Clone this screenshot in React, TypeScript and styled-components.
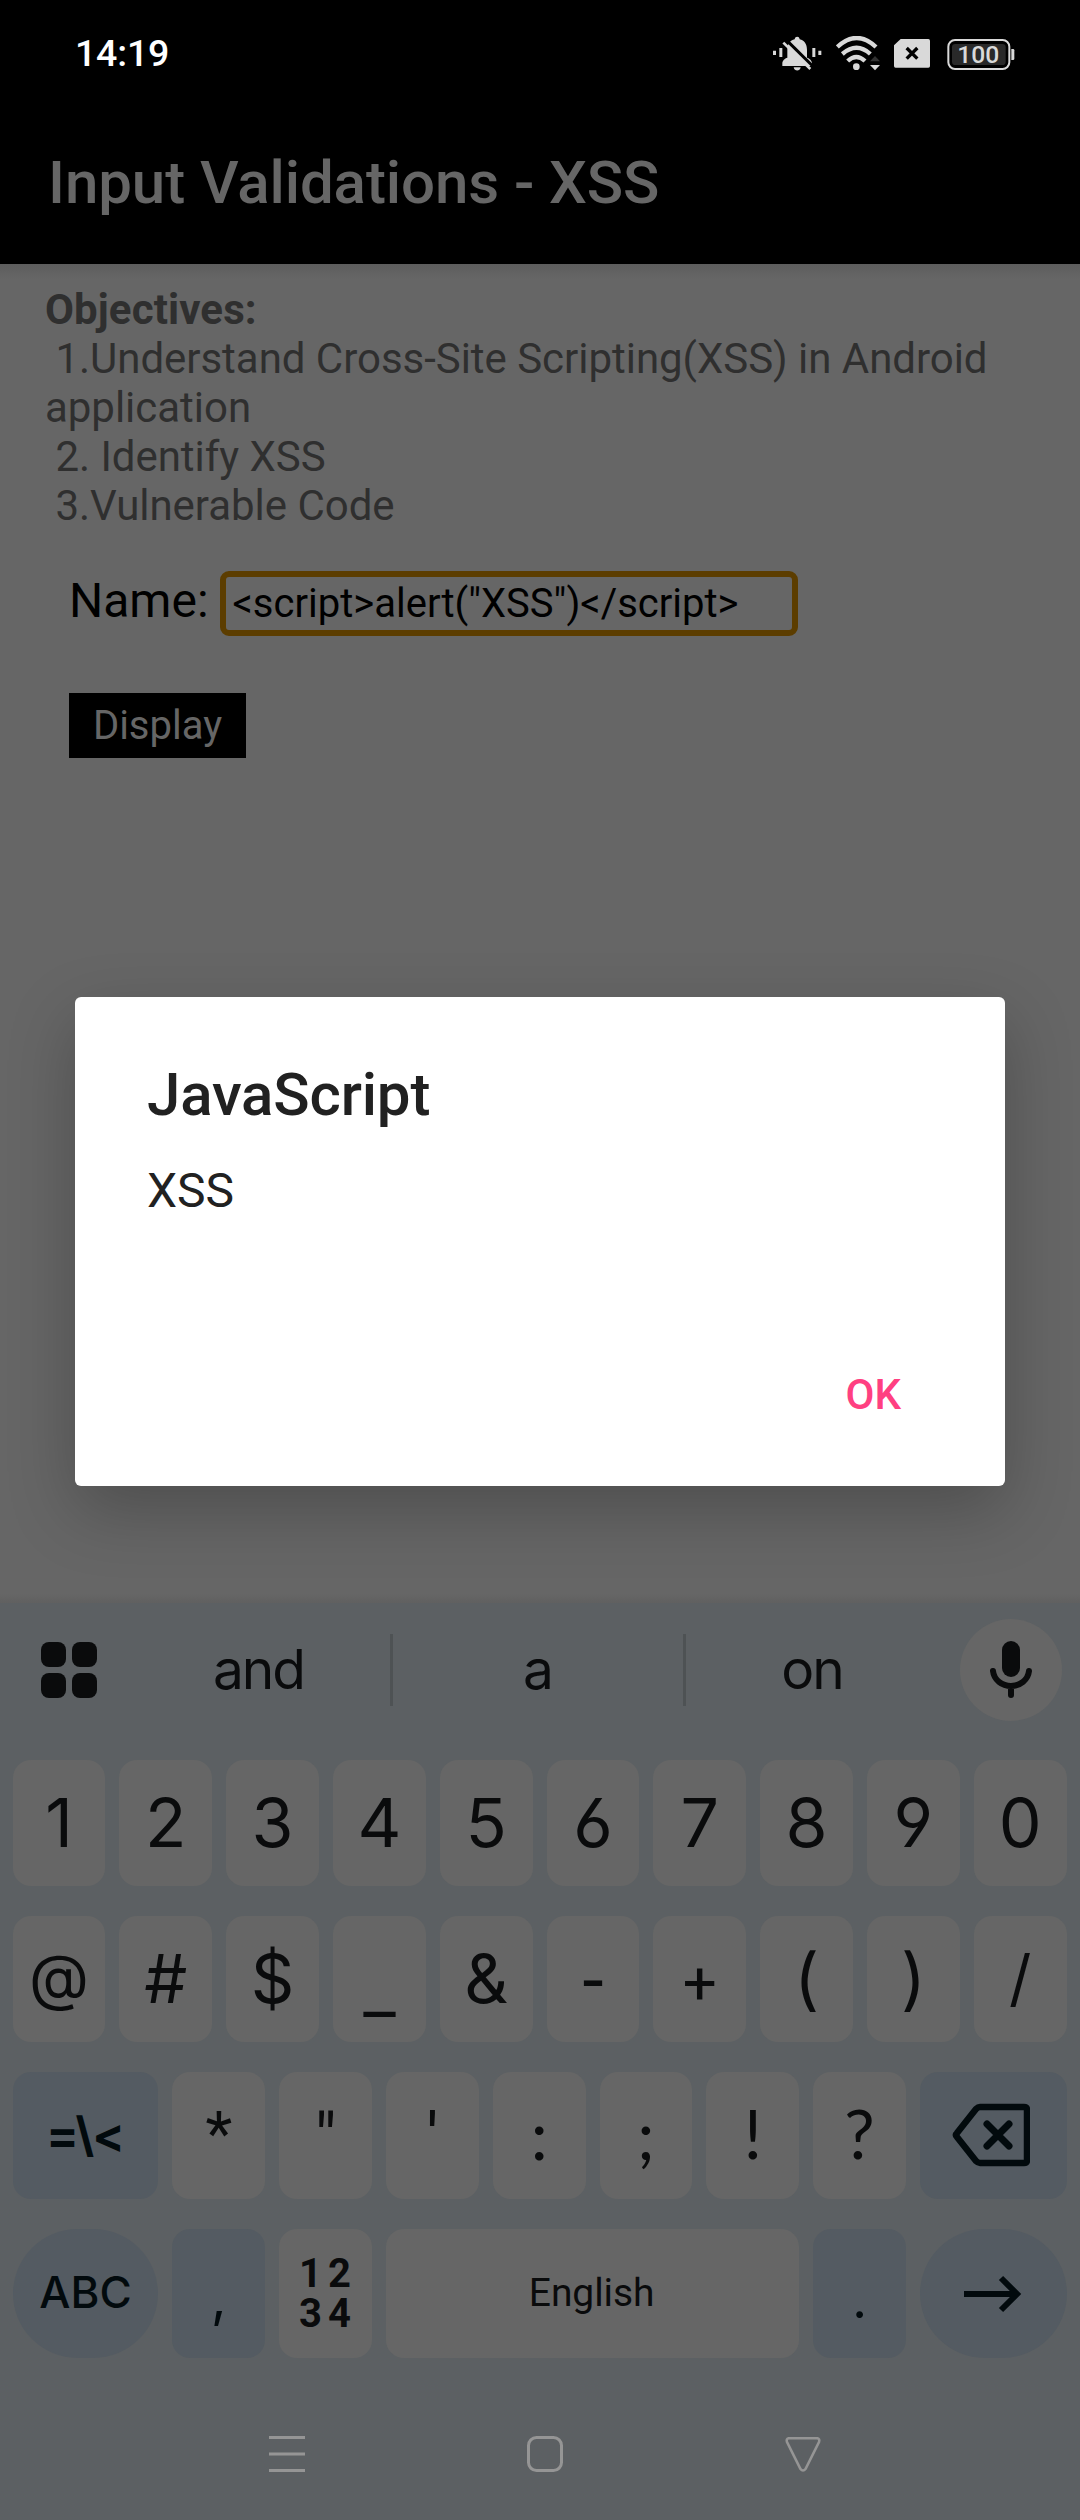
import React from 'react';
import styled, { createGlobalStyle, css } from 'styled-components';

const Global = createGlobalStyle`
  * { box-sizing: border-box; }
  body { margin: 0; background: #666; }
`;

const Screen = styled.div`
  position: relative;
  display: flex;
  flex-direction: column;
  width: 1080px;
  height: 2520px;
  overflow: hidden;
  background: #666666;
  font-family: Roboto, 'Liberation Sans', sans-serif;
`;

const StatusBar = styled.header`
  display: flex;
  align-items: center;
  justify-content: space-between;
  height: 101px;
  padding: 5px 64px 0 75px;
  background: #000;
`;

const Clock = styled.span`
  color: #fff;
  font-size: 37.5px;
  font-weight: 500;
  line-height: 44px;
  letter-spacing: -0.2px;
`;

const StatusIcons = styled.div`
  display: flex;
  align-items: center;
  gap: 14px;
  height: 35px;
  svg { display: block; }
  svg:last-child { margin-left: 3px; }
`;

const Toolbar = styled.div`
  display: flex;
  align-items: center;
  height: 163px;
  padding-left: 48px;
  background: #000;
`;

const ToolbarTitle = styled.h1`
  margin: 0;
  color: #666666;
  font-size: 60px;
  font-weight: 500;
  line-height: 70px;
  letter-spacing: -0.08px;
  white-space: nowrap;
`;

const Page = styled.main`
  height: 1339px;
  padding: 21px 45px 0;
  background:
    linear-gradient(#5d5d5d, #666666) 0 0 / 100% 15px no-repeat,
    linear-gradient(#666666, #606060) 0 100% / 100% 9px no-repeat,
    #666666;
`;

const Objectives = styled.div`
  height: 286px;
  color: #2f2f2f;
  font-size: 42px;
  line-height: 49px;
  letter-spacing: -0.03px;
  white-space: pre;
  b { letter-spacing: 0.12px; }
`;

const Form = styled.form`
  display: flex;
  flex-direction: column;
  align-items: flex-start;
  gap: 57px;
  padding-left: 24px;
  color: #000;
`;

const Field = styled.label`
  display: flex;
  align-items: baseline;
  gap: 11px;
  height: 65px;
  font-size: 48px;
  line-height: 56px;
`;

const Input = styled.span`
  width: 578px;
  height: 65px;
  padding: 0 7px;
  border: 6px solid #5c3d00;
  border-radius: 9px;
  font-size: 40px;
  line-height: 53px;
  white-space: nowrap;
`;

const SubmitButton = styled.button`
  width: 177px;
  height: 65px;
  padding: 0;
  border: 0;
  background: #000;
  color: #666666;
  font-family: inherit;
  font-size: 40px;
  line-height: 65px;
`;

const Dialog = styled.section`
  position: absolute;
  top: 997px;
  left: 75px;
  display: flex;
  flex-direction: column;
  width: 930px;
  height: 489px;
  padding: 63px 72px 66px;
  border-radius: 6px;
  background: #fff;
  color: #212121;
  box-shadow: 0 24px 68px rgba(0, 0, 0, 0.24);
`;

const DialogTitle = styled.h2`
  margin: 0 0 33px;
  font-size: 60px;
  font-weight: 500;
  line-height: 70px;
  letter-spacing: -0.15px;
`;

const DialogMessage = styled.p`
  flex: 1;
  margin: 0;
  font-size: 48px;
  line-height: 56px;
`;

const DialogButton = styled.button`
  align-self: flex-end;
  margin-right: 32px;
  padding: 0;
  border: 0;
  background: none;
  color: #ff4081;
  font-family: inherit;
  font-size: 42px;
  font-weight: 500;
  line-height: 50px;
`;

const Keyboard = styled.section`
  display: flex;
  flex-direction: column;
  height: 917px;
  background: #5c6063;
  color: #0a0b0c;
  font-family: Inter, Roboto, sans-serif;
`;

const Suggestions = styled.div`
  display: flex;
  align-items: center;
  height: 134px;
  margin-bottom: 23px;
`;

const GridButton = styled.div`
  display: grid;
  grid-template-columns: 25px 25px;
  gap: 6px;
  width: 128px;
  padding-left: 41px;
  span {
    height: 25px;
    border-radius: 8px;
    background: #0a0b0c;
  }
`;

const Suggestion = styled.span<{ $w: number }>`
  width: ${(p) => p.$w}px;
  padding: 0 1px 2px 0;
  text-align: center;
  font-size: 55px;
  font-weight: 400;
  line-height: 66px;
  letter-spacing: -2px;
`;

const Divider = styled.span`
  width: 3px;
  height: 72px;
  background: #4e5254;
`;

const MicButton = styled.div`
  display: flex;
  align-items: center;
  justify-content: center;
  width: 102px;
  height: 102px;
  margin-left: 21px;
  border-radius: 50%;
  background: #666666;
`;

const Rows = styled.div`
  display: flex;
  flex-direction: column;
  gap: 30px;
  padding: 0 13px 0 12.6px;
`;

const Row = styled.div<{ $h?: number }>`
  display: flex;
  gap: 14px;
  height: ${(p) => p.$h ?? 126}px;
`;

type Face = 'inter' | 'lato' | 'roboto';
const faces: Record<Face, string> = {
  inter: "Inter, sans-serif",
  lato: "Lato, sans-serif",
  roboto: "Roboto, sans-serif",
};

const Key = styled.div<{
  $tone?: 'light' | 'blue';
  $shape?: 'wide' | 'space';
  $pill?: boolean;
  $face?: Face;
  $size?: number;
  $weight?: number;
  $drop?: number;
}>`
  display: flex;
  align-items: center;
  justify-content: center;
  flex: 0 0 92.8px;
  padding-top: ${(p) => Math.max(0, p.$drop ?? 0)}px;
  padding-bottom: ${(p) => Math.max(0, -(p.$drop ?? 0))}px;
  border-radius: ${(p) => (p.$pill ? 65 : 18)}px;
  background: ${(p) => (p.$tone === 'blue' ? '#545b62' : '#666666')};
  color: ${(p) => (p.$tone === 'blue' ? '#020a0d' : '#0a0b0c')};
  font-family: ${(p) => faces[p.$face ?? 'inter']};
  font-size: ${(p) => p.$size ?? 68}px;
  font-weight: ${(p) => p.$weight ?? 400};
  font-feature-settings: 'cv03', 'cv04';
  line-height: 1;
  white-space: nowrap;
  ${(p) => p.$shape === 'wide' && css`
    flex: 0 0 145.8px;
    &:last-child { flex-basis: 147px; }
  `}
  ${(p) => p.$shape === 'space' && css`flex: 1;`}
`;

const NumberPad = styled.div`
  display: grid;
  grid-template-columns: 29px 22px;
  margin-right: 2px;
  font-family: Roboto, sans-serif;
  font-size: 40px;
  font-weight: 700;
  line-height: 40px;
`;

const SpaceLabel = styled.span`
  margin-right: 2px;
  letter-spacing: -0.1px;
`;

const NavBar = styled.nav`
  display: flex;
  align-items: center;
  gap: 222px;
  flex: 1;
  padding: 30px 0 0 269px;
  svg { display: block; }
`;

const ink = '#d9d9d9';

const MutedBell = () => (
  <svg width="49" height="35" viewBox="101 45 147 105" fill={ink}>
    <path d="M101 89h9v13h-9zM120 81h9v27h-9zM219 81h9v27h-9zM237 89h9v13h-9z" />
    <path d="M166 55c1-10 14-10 15 0 14 3 22 15 22 31v24c8 2 15 9 15 17v8h-89v-8c0-8 7-15 15-17V86c0-16 8-28 22-31z" />
    <path d="M163 139h21c-2 13-19 13-21 0z" />
    <path d="M140 56L226 141" stroke="#000" strokeWidth="9" />
    <path d="M120 60L134 57 143 66 136 80z" fill="#000" />
    <path d="M132 65L213 144" stroke={ink} strokeWidth="8" />
  </svg>
);

const Wifi = () => (
  <svg width="44" height="35" viewBox="288 45 132 105" fill="none" stroke={ink}>
    <path d="M292 78Q350 24 408 78" strokeWidth="13" />
    <path d="M307 99Q350 62 391 99" strokeWidth="13" />
    <path d="M323 120Q349 96 375 120" strokeWidth="13" />
    <circle cx="349" cy="137" r="10" fill={ink} stroke="none" />
    <path d="M378 123L405 93 430 123z" fill="#000" stroke="none" />
    <path d="M390 121L405 105 420 121z" fill="#303030" stroke="none" />
    <path d="M390 132H420L405 148z" fill={ink} stroke="none" />
  </svg>
);

const SimOff = () => (
  <svg width="36" height="35" viewBox="462 45 108 105">
    <path d="M482 54h83q5 0 5 5v76q0 5-5 5h-98q-5 0-5-5V73z" fill={ink} />
    <path d="M500 81l32 32M532 81l-32 32" stroke="#000" strokeWidth="10" />
  </svg>
);

const Battery = () => (
  <svg width="69" height="35" viewBox="620 45 207 105">
    <rect x="624" y="57" width="183" height="87" rx="20" fill="none" stroke={ink} strokeWidth="6" />
    <rect x="635" y="69" width="161" height="63" rx="10" fill="#292929" />
    <path d="M813 84h5q4 0 4 4v25q0 4-4 4h-5z" fill={ink} />
    <text x="714" y="125" fill={ink} fontFamily="Roboto, sans-serif" fontSize="74" fontWeight="500" textAnchor="middle">100</text>
  </svg>
);

const Mic = () => (
  <svg width="44" height="60" viewBox="989 1639 44 60">
    <rect x="1002" y="1640" width="18" height="36" rx="9" fill="#0a0b0c" />
    <path d="M993 1670c1 9 9 15 18 15s17-6 18-15M1011 1685v9" fill="none" stroke="#0a0b0c" strokeWidth="6" strokeLinecap="round" />
  </svg>
);

const KeyIcon = styled.svg<{ $nudge: number }>`
  display: block;
  margin-right: ${(p) => p.$nudge}px;
`;

const Backspace = () => (
  <KeyIcon $nudge={4} width="78" height="64" viewBox="952 2103 78 64" fill="none" stroke="#020a0d" strokeWidth="6.5" strokeLinecap="round" strokeLinejoin="round">
    <path d="M980 2107h44q3 0 3 3v50q0 3-3 3h-44q-2 0-4-2l-19-24q-2-2 0-4l19-24q2-2 4-2z" />
    <path d="M987 2124l22 22M1009 2124l-22 22" strokeWidth="7" />
  </KeyIcon>
);

const Arrow = () => (
  <KeyIcon $nudge={2} width="58" height="38" viewBox="964 2274 58 38" fill="none" stroke="#020a0d" strokeWidth="6">
    <path d="M964 2293h53M1001 2277l16 16-16 16" />
  </KeyIcon>
);

export default function App() {
  return (
    <Screen>
      <Global />
      <StatusBar>
        <Clock>14:19</Clock>
        <StatusIcons>
          <MutedBell />
          <Wifi />
          <SimOff />
          <Battery />
        </StatusIcons>
      </StatusBar>
      <Toolbar>
        <ToolbarTitle>Input Validations - XSS</ToolbarTitle>
      </Toolbar>
      <Page>
        <Objectives>
          <b>Objectives:</b>
          {'\n 1.Understand Cross-Site Scripting(XSS) in Android\napplication\n 2. Identify XSS\n 3.Vulnerable Code'}
        </Objectives>
        <Form>
          <Field>
            Name:
            <Input>{'<script>alert("XSS")</script>'}</Input>
          </Field>
          <SubmitButton type="button">Display</SubmitButton>
        </Form>
      </Page>

      <Keyboard>
        <Suggestions>
          <GridButton><span /><span /><span /><span /></GridButton>
          <Suggestion $w={262}>and</Suggestion>
          <Divider />
          <Suggestion $w={290}>a</Suggestion>
          <Divider />
          <Suggestion $w={253}>on</Suggestion>
          <MicButton><Mic /></MicButton>
        </Suggestions>
        <Rows>
          <Row>
            {'1234567890'.split('').map((d) => <Key key={d} $drop={-2}>{d}</Key>)}
          </Row>
          <Row>
            <Key $size={62} $drop={-4}>@</Key>
            <Key $drop={-2}>#</Key>
            <Key $drop={-2}>$</Key>
            <Key $face="roboto" $size={72} $drop={18}>_</Key>
            <Key $drop={-2}>&amp;</Key>
            <Key $face="lato" $size={74} $drop={-4}>-</Key>
            <Key $face="roboto" $size={60} $drop={10}>+</Key>
            <Key $drop={-2}>(</Key>
            <Key $drop={-2}>)</Key>
            <Key $size={62} $drop={-2}>/</Key>
          </Row>
          <Row $h={127}>
            <Key $tone="blue" $shape="wide" $size={48} $weight={700} $drop={-1}>{'=\\<'}</Key>
            <Key $face="roboto" $size={62} $drop={-4}>*</Key>
            <Key $face="roboto" $drop={7}>"</Key>
            <Key $face="roboto" $drop={7}>'</Key>
            <Key $face="lato" $drop={-4}>:</Key>
            <Key $face="lato" $drop={-4}>;</Key>
            <Key $face="lato" $drop={-6}>!</Key>
            <Key $face="lato" $drop={-6}>?</Key>
            <Key $tone="blue" $shape="wide" $drop={-1}><Backspace /></Key>
          </Row>
          <Row $h={129}>
            <Key $tone="blue" $shape="wide" $pill $size={44} $weight={500} $drop={-3}>ABC</Key>
            <Key $tone="blue" $size={54} $drop={8}>,</Key>
            <Key><NumberPad><span>1</span><span>2</span><span>3</span><span>4</span></NumberPad></Key>
            <Key $shape="space" $face="roboto" $size={39}><SpaceLabel>English</SpaceLabel></Key>
            <Key $tone="blue" $face="lato" $size={54} $drop={8}>.</Key>
            <Key $tone="blue" $shape="wide" $pill><Arrow /></Key>
          </Row>
        </Rows>
        <NavBar>
          <svg width="36" height="36" viewBox="0 0 36 36" stroke="#959595" strokeWidth="3">
            <path d="M0 1.5H36M0 18H36M0 34.5H36" />
          </svg>
          <svg width="36" height="36" viewBox="0 0 36 36" fill="none" stroke="#959595" strokeWidth="3">
            <rect x="1.5" y="1.5" width="33" height="33" rx="8" />
          </svg>
          <svg width="36" height="36" viewBox="0 0 36 36" fill="none" stroke="#959595" strokeWidth="2.6">
            <path d="M3.5 2.3H32.5Q35 2.8 34 6L20.5 33Q18 36 15.5 33L2 6Q1 2.8 3.5 2.3z" />
          </svg>
        </NavBar>
      </Keyboard>

      <Dialog role="alertdialog">
        <DialogTitle>JavaScript</DialogTitle>
        <DialogMessage>XSS</DialogMessage>
        <DialogButton>OK</DialogButton>
      </Dialog>
    </Screen>
  );
}
